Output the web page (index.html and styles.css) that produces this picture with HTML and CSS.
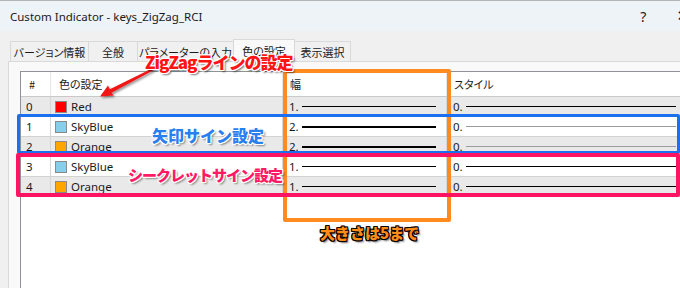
FILE: index.html
```html
<!DOCTYPE html>
<html lang="ja">
<head>
<meta charset="utf-8">
<title>Custom Indicator</title>
<link rel="stylesheet" href="styles.css">
</head>
<body>
<div class="window">
  <div class="titlebar">
    <span class="title">Custom Indicator - keys_ZigZag_RCI</span>
    <span class="help">?</span>
    <span class="close">✕</span>
  </div>
  <div class="body">
    <div class="tabs">
      <div class="tab t1">バージョン情報</div>
      <div class="tab t2">全般</div>
      <div class="tab t3">パラメーターの入力</div>
      <div class="tab t4 active">色の設定</div>
      <div class="tab t5">表示選択</div>
    </div>
    <div class="panel">
      <div class="list">
        <div class="row head">
          <div class="cell c-num">#</div>
          <div class="cell c-color">色の設定</div>
          <div class="cell c-width">幅</div>
          <div class="cell c-style">スタイル</div>
        </div>
        <div class="row alt">
          <div class="cell c-num">0</div>
          <div class="cell c-color"><span class="swatch red"></span>Red</div>
          <div class="cell c-width">1.<span class="line w1"></span></div>
          <div class="cell c-style">0.<span class="line w1"></span></div>
        </div>
        <div class="row">
          <div class="cell c-num">1</div>
          <div class="cell c-color"><span class="swatch sky"></span>SkyBlue</div>
          <div class="cell c-width">2.<span class="line w2"></span></div>
          <div class="cell c-style">0.<span class="line w1 grey"></span></div>
        </div>
        <div class="row alt">
          <div class="cell c-num">2</div>
          <div class="cell c-color"><span class="swatch orange"></span>Orange</div>
          <div class="cell c-width">2.<span class="line w2"></span></div>
          <div class="cell c-style">0.<span class="line w1 grey"></span></div>
        </div>
        <div class="row">
          <div class="cell c-num">3</div>
          <div class="cell c-color"><span class="swatch sky"></span>SkyBlue</div>
          <div class="cell c-width">1.<span class="line w1"></span></div>
          <div class="cell c-style">0.<span class="line w1"></span></div>
        </div>
        <div class="row alt">
          <div class="cell c-num">4</div>
          <div class="cell c-color"><span class="swatch orange"></span>Orange</div>
          <div class="cell c-width">1.<span class="line w1"></span></div>
          <div class="cell c-style">0.<span class="line w1"></span></div>
        </div>
      </div>
    </div>
  </div>

  <div class="box box-orange"></div>
  <div class="box box-blue"></div>
  <div class="box box-pink"></div>

  <svg class="arrow" width="680" height="288" viewBox="0 0 680 288">
    <defs>
      <filter id="sh" x="-20%" y="-20%" width="140%" height="140%">
        <feDropShadow dx="1.5" dy="1.5" stdDeviation="1" flood-color="#000" flood-opacity="0.45"/>
      </filter>
    </defs>
    <polygon filter="url(#sh)" fill="#f01818" points="152,68.5 153,70.5 111.5,92.8 113.5,95.5 100,96.5 108,85.5 109.8,89.2"/>
  </svg>

  <div class="note note-red">ZigZagラインの設定</div>
  <div class="note note-blue">矢印サイン設定</div>
  <div class="note note-pink">シークレットサイン設定</div>
  <div class="note note-orange">大きさは5まで</div>
</div>
</body>
</html>
```
FILE: styles.css
```css
* { box-sizing: border-box; }
html, body { margin: 0; padding: 0; background: #ffffff; }

.window {
  position: relative;
  width: 680px;
  height: 288px;
  overflow: hidden;
  display: flex;
  flex-direction: column;
  background: #f0f0f0;
  font-family: "Noto Sans", "Noto Sans CJK JP", sans-serif;
  color: #1a1a1a;
}

/* title bar */
.titlebar {
  flex: none;
  height: 31px;
  background: #eef3f8;
  border-top: 1px solid #b4b4b4;
  display: flex;
  align-items: center;
  padding-left: 10px;
  font-size: 11.5px;
  color: #1a1a1a;
}
.title { white-space: nowrap; }
.help { margin-left: auto; font-size: 14px; }
.close { margin-left: 30px; margin-right: -9px; font-size: 15px; font-family: "DejaVu Sans", sans-serif; }

/* body */
.body {
  flex: 1;
  display: flex;
  flex-direction: column;
  padding: 8px 0 0 8px;
  min-height: 0;
}

.tabs {
  display: flex;
  align-items: flex-end;
  height: 22px;
  padding-left: 2px;
  position: relative;
  z-index: 2;
  font-family: "Noto Sans CJK JP", sans-serif;
  font-feature-settings: "palt";
  font-size: 11px;
}
.tab {
  height: 20px;
  border: 1px solid #d9d9d9;
  border-bottom: none;
  background: #f0f0f0;
  display: flex;
  align-items: center;
  justify-content: center;
  margin-right: -1px;
  white-space: nowrap;
  color: #1a1a1a;
}
.t1 { width: 79px; }
.t2 { width: 50px; }
.t3 { width: 97px; }
.t4 { width: 62px; }
.t5 { width: 57px; }
.tab.active {
  height: 23px;
  margin-bottom: -1px;
  background: #f9f9f9;
  position: relative;
  z-index: 3;
}

.panel {
  flex: 1;
  display: flex;
  border: 1px solid #d9d9d9;
  border-right: none;
  border-bottom: none;
  background: #f9f9f9;
  padding: 9px 0 0 11px;
  min-height: 0;
}

.list {
  flex: none;
  width: 700px;
  background: #ffffff;
  border-top: 1px solid #8f9399;
  border-left: 1px solid #8f9399;
  font-size: 11.5px;
}

.row {
  display: grid;
  grid-template-columns: 30px 232px 164px 240px;
  height: 20px;
  border-bottom: 1px solid #d2d2d2;
  background: #ffffff;
}
.row.alt { background: #e9e9e9; }
.row.head {
  height: 25px;
  background: #ffffff;
  border-bottom: 1px solid #c9c9c9;
  font-family: "Noto Sans CJK JP", sans-serif;
  font-feature-settings: "palt";
  font-size: 11px;
}

.cell {
  display: flex;
  align-items: center;
  border-right: 1px solid #d6d6d6;
  padding-left: 6px;
  white-space: nowrap;
  min-width: 0;
}
.head .cell { border-right-color: #e6e6e6; padding-left: 7px; }
.head .c-num { padding-left: 8px; }
.head .c-color { padding-left: 8px; }
.c-num { padding-left: 5px; }
.c-color { padding-left: 4px; }

.swatch {
  width: 12px;
  height: 12px;
  border: 1px solid #8a8a8a;
  margin-right: 4px;
  flex: none;
}
.swatch.red { background: #ff0000; }
.swatch.sky { background: #87ceeb; }
.swatch.orange { background: #ffa500; }

.line {
  flex: 1;
  margin-left: 3px;
  margin-right: 10px;
  background: #000000;
}
.line.w1 { height: 1px; }
.line.w2 { height: 2px; }
.line.grey { background: #9c9c9c; }

/* annotations */
.box {
  position: absolute;
  z-index: 10;
  border-style: solid;
  border-radius: 2px;
  pointer-events: none;
}
.box-orange {
  left: 283px; top: 69px; width: 168px; height: 153px;
  border-width: 4px;
  border-color: #ff8a1f;
}
.box-blue {
  left: 17px; top: 114px; right: 0; height: 40px;
  border-width: 3px;
  border-color: #1c6fee;
}
.box-pink {
  left: 16px; top: 153px; right: 0; height: 44px;
  border-width: 4px;
  border-color: #ff1464;
}

.arrow {
  position: absolute;
  z-index: 11;
  left: 0; top: 0;
  pointer-events: none;
}

.note {
  position: absolute;
  z-index: 12;
  white-space: nowrap;
  font-family: "Noto Sans CJK JP", sans-serif;
  font-weight: 900;
  line-height: 1;
}
.note-red {
  left: 145px; top: 53px;
  font-size: 17px;
  letter-spacing: -1px;
  color: #ff1414;
  text-shadow: -1px -1px 0 #fff, 1px -1px 0 #fff, -1px 1px 0 #fff, 1px 1px 0 #fff,
               0 -1px 0 #fff, 0 1px 0 #fff, -1px 0 0 #fff, 1px 0 0 #fff,
               2px 2px 2px rgba(0,0,0,0.55);
}
.note-blue {
  left: 152px; top: 127px;
  font-size: 16px;
  color: #2a7ff0;
  text-shadow: -1px -1px 0 #fff, 1px -1px 0 #fff, -1px 1px 0 #fff, 1px 1px 0 #fff,
               0 -1px 0 #fff, 0 1px 0 #fff, -1px 0 0 #fff, 1px 0 0 #fff,
               2px 2px 2px rgba(0,0,0,0.45);
}
.note-pink {
  left: 128px; top: 167px;
  font-size: 15px;
  letter-spacing: -1px;
  color: #ff1a66;
  text-shadow: -1px -1px 0 #fff, 1px -1px 0 #fff, -1px 1px 0 #fff, 1px 1px 0 #fff,
               0 -1px 0 #fff, 0 1px 0 #fff, -1px 0 0 #fff, 1px 0 0 #fff,
               2px 2px 2px rgba(0,0,0,0.45);
}
.note-orange {
  left: 320px; top: 225px;
  font-size: 15px;
  color: #ff8c1a;
  text-shadow: -1px -1px 0 #000, 1px -1px 0 #000, -1px 1px 0 #000, 1px 1px 0 #000,
               0 -1px 0 #000, 0 1px 0 #000, -1px 0 0 #000, 1px 0 0 #000,
               2px 2px 2px rgba(0,0,0,0.6);
}
```
